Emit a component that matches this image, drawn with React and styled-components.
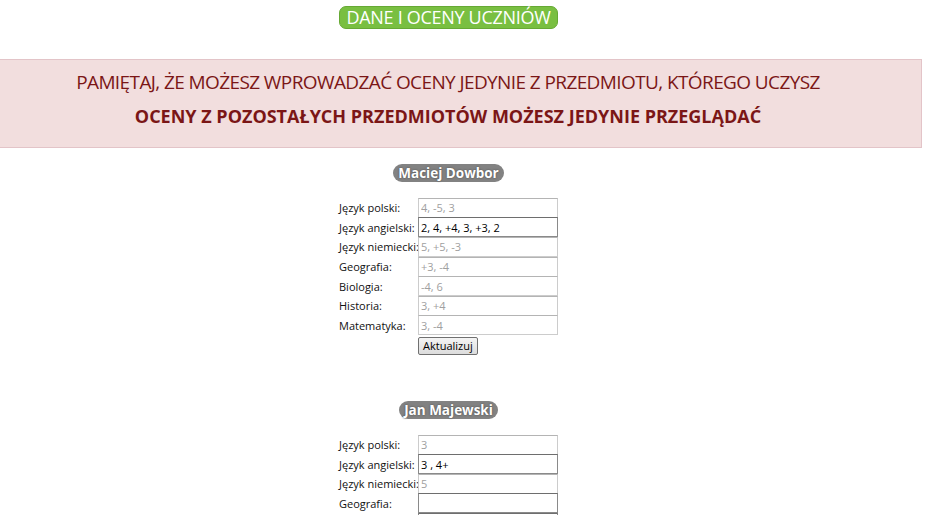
import styled, { createGlobalStyle } from "styled-components"

const Global = createGlobalStyle`
  html, body { margin: 0; padding: 0; background: #fff; }
  body { font-family: "Open Sans", "DejaVu Sans", sans-serif; color: #111; }
`

const Page = styled.div`
  width: 925px;
  padding-top: 6px;
`
const Center = styled.div`
  width: 897px;
  display: flex;
  flex-direction: column;
  align-items: center;
`
const Title = styled.div`
  height: 23px;
  width: 219px;
  box-sizing: border-box;
  border-radius: 7px;
  background: #79bf41;
  border: 1px solid #66a934;
  color: #fff;
  font-size: 18px;
  line-height: 21px;
  text-align: center;
  letter-spacing: -0.3px;
`
const Alert = styled.div`
  margin: 30px 3px 0 0;
  height: 89px;
  box-sizing: border-box;
  background: #f2dede;
  border: 1px solid #e3c4c8;
  border-left: none;
  padding-right: 25px;
  text-align: center;
  color: #7b1616;
  font-family: "Open Sans", sans-serif;
`
const AlertLine = styled.div`
  font-size: ${p => (p.$bold ? 18 : 19)}px;
  font-weight: ${p => (p.$bold ? 700 : 400)};
  letter-spacing: ${p => (p.$bold ? 0 : -0.6)}px;
  line-height: 34px;
  padding-top: ${p => (p.$bold ? 0 : 5)}px;
  white-space: nowrap;
`
const Student = styled.div`
  display: flex;
  flex-direction: column;
  align-items: center;
  margin-top: ${p => p.$top}px;
`
const Name = styled.div`
  height: 18px;
  padding: 0 5px;
  border-radius: 9px;
  background: #828282;
  color: #fff;
  font-weight: 700;
  font-size: 13.5px;
  line-height: 18px;
  text-shadow: 0 0 2px #444;
`
const Grid = styled.div`
  margin-top: 16px;
  display: grid;
  grid-template-columns: 79px 140px;
  grid-auto-rows: 19.6px;
  align-items: center;
`
const Label = styled.div`
  font-size: 11px;
  white-space: nowrap;
`
const Field = styled.input`
  box-sizing: border-box;
  width: 140px;
  height: 20px;
  margin: 0;
  padding: 0 2px;
  font-family: "Open Sans", sans-serif;
  font-size: 11px;
  color: ${p => (p.disabled ? "#a0a0a0" : "#000")};
  background: #fff;
  border: 1px solid ${p => (p.disabled ? "#cccccc" : "#8a8a8a")};
  border-top-color: ${p => (p.disabled ? "#b4b4b4" : "#6e6e6e")};
  outline: none;
`
const Button = styled.button`
  grid-column: 2;
  justify-self: start;
  margin-top: 3px;
  height: 18px;
  padding: 0 4px;
  font-family: "Open Sans", sans-serif;
  font-size: 11px;
  color: #000;
  background: linear-gradient(#f4f4f4, #dcdcdc);
  border: 1px solid #707070;
  border-radius: 2px;
  line-height: 14px;
`

const students = [
  {
    name: "Maciej Dowbor",
    top: 16,
    button: true,
    rows: [
      ["Język polski:", "4, -5, 3", true],
      ["Język angielski:", "2, 4, +4, 3, +3, 2", false],
      ["Język niemiecki:", "5, +5, -3", true],
      ["Geografia:", "+3, -4", true],
      ["Biologia:", "-4, 6", true],
      ["Historia:", "3, +4", true],
      ["Matematyka:", "3, -4", true],
    ],
  },
  {
    name: "Jan Majewski",
    top: 46,
    button: false,
    rows: [
      ["Język polski:", "3", true],
      ["Język angielski:", "3 , 4+", false],
      ["Język niemiecki:", "5", true],
      ["Geografia:", "", false],
      ["Biologia:", "", false],
    ],
  },
]

export default function App() {
  return (
    <Page>
      <Global />
      <Center>
        <Title>DANE I OCENY UCZNIÓW</Title>
      </Center>
      <Alert>
        <AlertLine>PAMIĘTAJ, ŻE MOŻESZ WPROWADZAĆ OCENY JEDYNIE Z PRZEDMIOTU, KTÓREGO UCZYSZ</AlertLine>
        <AlertLine $bold>OCENY Z POZOSTAŁYCH PRZEDMIOTÓW MOŻESZ JEDYNIE PRZEGLĄDAĆ</AlertLine>
      </Alert>
      <Center>
        {students.map(s => (
          <Student key={s.name} $top={s.top}>
            <Name>{s.name}</Name>
            <Grid>
              {s.rows.map(([label, value, dis]) => [
                <Label key={label + "l"}>{label}</Label>,
                <Field key={label + "f"} defaultValue={value} disabled={dis} />,
              ])}
              {s.button && <Button>Aktualizuj</Button>}
            </Grid>
          </Student>
        ))}
      </Center>
    </Page>
  )
}
